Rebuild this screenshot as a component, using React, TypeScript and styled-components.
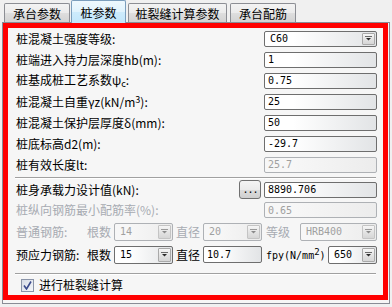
import React from 'react'
import styled, { createGlobalStyle } from 'styled-components'

const GlobalStyle = createGlobalStyle`
  html, body {
    margin: 0;
    padding: 0;
    background: #f0f0f0;
  }
  body {
    width: 392px;
    height: 307px;
    overflow: hidden;
    font-family: "Noto Sans CJK SC", sans-serif;
    font-size: 12px;
    color: #000;
  }
`

const mono = `"DejaVu Sans Mono", "Liberation Mono", monospace`

const Window = styled.div`
  width: 392px;
  height: 307px;
  box-sizing: border-box;
  padding: 0 2px;
  display: flex;
  flex-direction: column;
`

const TabBar = styled.div`
  display: flex;
  align-items: flex-end;
  height: 22px;
  position: relative;
  z-index: 1;
`

const Tab = styled.div<{ $active?: boolean; $w: number; $ml: number }>`
  box-sizing: border-box;
  width: ${p => p.$w}px;
  margin-left: ${p => p.$ml}px;
  height: ${p => (p.$active ? 23 : 19)}px;
  margin-bottom: ${p => (p.$active ? -1 : 0)}px;
  padding-top: ${p => (p.$active ? 1 : 2)}px;
  border: 1px solid ${p => (p.$active ? '#7b9ebd' : '#8c8e94')};
  border-bottom: none;
  border-radius: 2px 2px 0 0;
  background: ${p =>
    p.$active
      ? 'linear-gradient(#eef8fe, #e0f3fd 50%, #cdebfc 51%, #c2e6fb)'
      : 'linear-gradient(#f3f3f3, #ebebeb 50%, #dedede 51%, #d3d3d3)'};
  display: flex;
  align-items: center;
  justify-content: center;
  font-size: 12px;
  line-height: 1;
  white-space: nowrap;
`

const Pane = styled.div`
  box-sizing: border-box;
  width: 388px;
  border: 1px solid #898c95;
  background: #f6f6f6;
  padding: 0 1px 3px 0;
`

const RedFrame = styled.div`
  box-sizing: border-box;
  height: 277px;
  border: 5px solid #ff0000;
  padding: 0 6px 0 8px;
  display: flex;
  flex-direction: column;
`

const Row = styled.div<{ $h: number }>`
  display: flex;
  align-items: center;
  height: ${p => p.$h}px;
  flex-shrink: 0;
`

const Label = styled.span<{ $disabled?: boolean; $w?: number; $ml?: number }>`
  font-size: 12px;
  line-height: 1;
  white-space: nowrap;
  color: ${p => (p.$disabled ? '#a7abb2' : '#000')};
  ${p => (p.$w ? `width: ${p.$w}px; flex-shrink: 0;` : '')}
  ${p => (p.$ml ? `margin-left: ${p.$ml}px;` : '')}
  sub {
    font-size: 9px;
    vertical-align: -2px;
  }
  sup {
    font-size: 9px;
    vertical-align: 4px;
  }
`

const MonoLabel = styled(Label)`
  font-family: ${mono};
  font-size: 10px;
`

const Field = styled.div<{
  $w?: number
  $h?: number
  $disabled?: boolean
  $pl?: number
  $right?: boolean
}>`
  box-sizing: border-box;
  width: ${p => p.$w ?? 113}px;
  height: ${p => p.$h ?? 16}px;
  flex-shrink: 0;
  margin-left: ${p => (p.$right ? 'auto' : '0')};
  border: 1px solid ${p => (p.$disabled ? '#aeb1b5' : '#6e6e6e')};
  border-radius: 2px;
  background: ${p =>
    p.$disabled
      ? 'linear-gradient(to right, #f7f7f7 25%, #ececec)'
      : 'linear-gradient(to right, #ffffff 25%, #e2e4e6)'};
  display: flex;
  align-items: center;
  padding-left: ${p => p.$pl ?? 3}px;
  font-family: ${mono};
  font-size: 10px;
  color: ${p => (p.$disabled ? '#a0a0a0' : '#000')};
  white-space: nowrap;
`

const DropButton = styled.span<{ $disabled?: boolean }>`
  box-sizing: border-box;
  margin-left: auto;
  margin-right: 1px;
  width: 13px;
  height: calc(100% - 2px);
  border: 1px solid ${p => (p.$disabled ? '#c4c4c4' : '#a9a9a9')};
  border-radius: 1px;
  background: linear-gradient(#f6f6f6, #e4e4e4 50%, #d6d6d6);
  display: flex;
  align-items: center;
  justify-content: center;
`

const DotsButton = styled.div`
  box-sizing: border-box;
  margin-left: auto;
  margin-right: 3px;
  width: 22px;
  height: 19px;
  border: 1px solid #707070;
  border-radius: 3px;
  background: linear-gradient(#f4f4f4, #ebebeb 50%, #dddddd 51%, #cfcfcf);
  display: flex;
  align-items: center;
  justify-content: center;
  font-family: ${mono};
  font-size: 10px;
  letter-spacing: -1px;
`

const Separator = styled.div<{ $mt: number }>`
  flex-shrink: 0;
  height: 0;
  margin: ${p => p.$mt}px 1px 0 -1px;
  border-top: 1px solid #a0a0a0;
  border-bottom: 1px solid #ffffff;
`

const CheckBox = styled.span`
  box-sizing: border-box;
  width: 13px;
  height: 13px;
  margin-left: 5px;
  margin-right: 5px;
  border: 1px solid #8a94a8;
  background: linear-gradient(135deg, #d6dbe6, #f4f6fa);
  display: flex;
  align-items: center;
  justify-content: center;
`

const Arrow = ({ disabled }: { disabled?: boolean }) => (
  <svg width="7" height="5" viewBox="0 0 7 5">
    <rect x="0" y="0" width="7" height="1" fill={disabled ? '#9a9a9a' : '#6a6a6a'} />
    <polygon points="1,2 6,2 3.5,4.5" fill={disabled ? '#8a8a8a' : '#2a2a2a'} />
  </svg>
)

const Combo = ({
  value,
  w,
  h,
  disabled,
  right,
}: {
  value: string
  w?: number
  h?: number
  disabled?: boolean
  right?: boolean
}) => (
  <Field $w={w} $h={h} $disabled={disabled} $pl={5} $right={right}>
    {value}
    <DropButton $disabled={disabled}>
      <Arrow disabled={disabled} />
    </DropButton>
  </Field>
)

const App: React.FC = () => {
  return (
    <>
      <GlobalStyle />
      <Window>
        <TabBar>
          <Tab $w={66} $ml={2}>承台参数</Tab>
          <Tab $w={55} $ml={1} $active>桩参数</Tab>
          <Tab $w={99} $ml={2}>桩裂缝计算参数</Tab>
          <Tab $w={66} $ml={3}>承台配筋</Tab>
        </TabBar>
        <Pane>
          <RedFrame>
            <Row $h={21}>
              <Label>桩混凝土强度等级:</Label>
              <Combo value="C60" right />
            </Row>
            <Row $h={21}>
              <Label>桩端进入持力层深度hb(m):</Label>
              <Field $right>1</Field>
            </Row>
            <Row $h={21}>
              <Label>
                桩基成桩工艺系数ψ<sub>c</sub>:
              </Label>
              <Field $right>0.75</Field>
            </Row>
            <Row $h={21}>
              <Label>
                桩混凝土自重γz(kN/m<sup>3</sup>):
              </Label>
              <Field $right>25</Field>
            </Row>
            <Row $h={21}>
              <Label>桩混凝土保护层厚度δ(mm):</Label>
              <Field $right>50</Field>
            </Row>
            <Row $h={21}>
              <Label>桩底标高d2(m):</Label>
              <Field $right>-29.7</Field>
            </Row>
            <Row $h={21}>
              <Label>桩有效长度lt:</Label>
              <Field $right $disabled>25.7</Field>
            </Row>
            <Separator $mt={2} />
            <Row $h={21}>
              <Label>桩身承载力设计值(kN):</Label>
              <DotsButton>...</DotsButton>
              <Field>8890.706</Field>
            </Row>
            <Row $h={20}>
              <Label $disabled>桩纵向钢筋最小配筋率(%):</Label>
              <Field $right $disabled>0.65</Field>
            </Row>
            <Row $h={23}>
              <Label $disabled $w={71}>普通钢筋:</Label>
              <Label $disabled $w={27}>根数</Label>
              <Combo value="14" w={59} h={18} disabled />
              <Label $disabled $w={27} $ml={3}>直径</Label>
              <Combo value="20" w={59} h={18} disabled />
              <Label $disabled $w={34} $ml={4}>等级</Label>
              <Combo value="HRB400" w={77} h={18} disabled />
            </Row>
            <Row $h={23}>
              <Label $w={71}>预应力钢筋:</Label>
              <Label $w={27}>根数</Label>
              <Combo value="15" w={59} h={18} />
              <Label $w={27} $ml={3}>直径</Label>
              <Field $w={59} $h={17}>10.7</Field>
              <MonoLabel $w={62} $ml={4}>
                fpy(N/mm<sup>2</sup>)
              </MonoLabel>
              <Combo value="650" w={49} h={18} />
            </Row>
            <Separator $mt={7} />
            <Row $h={20}>
              <CheckBox>
                <svg width="9" height="9" viewBox="0 0 9 9">
                  <path d="M1 4.5 L3.5 8 L8 0.5" fill="none" stroke="#3a4a8c" strokeWidth="1.6" />
                </svg>
              </CheckBox>
              <Label>进行桩裂缝计算</Label>
            </Row>
          </RedFrame>
        </Pane>
      </Window>
    </>
  )
}

export default App
